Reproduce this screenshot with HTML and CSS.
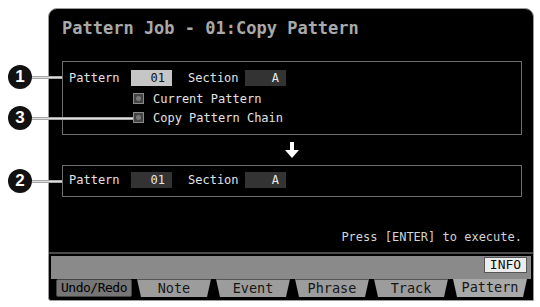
FILE: index.html
```html
<!DOCTYPE html>
<html lang="en">
<head>
    <meta charset="UTF-8">
    <title>Pattern Job - Copy Pattern</title>
    <link rel="stylesheet" href="styles.css">
</head>
<body>

    <div class="page">
        <!-- callout markers -->
        <div class="callout callout-1"><span class="num">1</span><span class="lead short"></span></div>
        <div class="callout callout-3"><span class="num">3</span><span class="lead long"></span></div>
        <div class="callout callout-2"><span class="num">2</span><span class="lead short"></span></div>

        <div class="screen">
            <div class="title">Pattern Job - 01:Copy Pattern</div>

            <div class="box source">
                <div class="row">
                    <span class="label">Pattern</span>
                    <span class="value light">01</span>
                    <span class="label section">Section</span>
                    <span class="value">A</span>
                </div>
                <div class="check-row">
                    <span class="check"></span>
                    <span>Current Pattern</span>
                </div>
                <div class="check-row">
                    <span class="check"></span>
                    <span>Copy Pattern Chain</span>
                </div>
            </div>

            <div class="arrow">
                <svg width="14" height="16" viewBox="0 0 14 16">
                    <path d="M5 0 H9 V8 H14 L7 16 L0 8 H5 Z" fill="#fff"/>
                </svg>
            </div>

            <div class="box dest">
                <div class="row">
                    <span class="label">Pattern</span>
                    <span class="value">01</span>
                    <span class="label section">Section</span>
                    <span class="value">A</span>
                </div>
            </div>

            <div class="message">Press [ENTER] to execute.</div>

            <div class="footer">
                <div class="bar">
                    <span class="info">INFO</span>
                </div>
                <div class="tabs">
                    <span class="tab undo">Undo/Redo</span>
                    <span class="tab">Note</span>
                    <span class="tab">Event</span>
                    <span class="tab">Phrase</span>
                    <span class="tab">Track</span>
                    <span class="tab active">Pattern</span>
                </div>
            </div>
        </div>
    </div>

</body>
</html>
```

FILE: styles.css
```css
body {
    margin: 0;
    background: #fff;
    font-family: "DejaVu Sans Mono", monospace;
}
.page {
    position: relative;
    width: 540px;
    height: 307px;
    padding-top: 8px;
    box-sizing: border-box;
}
.screen {
    margin-left: 48px;
    width: 486px;
    height: 293px;
    box-sizing: border-box;
    background: #000;
    border: 1px solid #9a9a9a;
    border-radius: 9px 9px 0 3px;
    display: flex;
    flex-direction: column;
    color: #e2e2e2;
    font-size: 12px;
}
.title {
    padding: 10px 13px 0;
    font-size: 17px;
    font-weight: bold;
    line-height: 18px;
    color: #a9a9a9;
}
.box {
    margin: 0 11px 0 13px;
    border: 1px solid #6e6e6e;
    padding: 8px 6px 7px;
}
.source {
    margin-top: 24px;
}
.dest {
    padding: 6px 6px 8px;
}
.row {
    display: flex;
    align-items: center;
    height: 16px;
}
.label {
    width: 62px;
    line-height: 16px;
}
.label.section {
    width: 57px;
    margin-left: 16px;
}
.value {
    width: 41px;
    height: 16px;
    line-height: 16px;
    box-sizing: border-box;
    padding-right: 7px;
    text-align: right;
    background: #333;
    color: #e8e8e8;
}
.value.light {
    background: #c6c6c6;
    color: #111;
}
.check-row {
    display: flex;
    align-items: center;
    height: 19px;
    padding-left: 64px;
}
.row + .check-row {
    margin-top: 3px;
}
.check {
    width: 11px;
    height: 11px;
    box-sizing: border-box;
    margin-right: 9px;
    border: 1px solid #8a8a8a;
    background: radial-gradient(circle, #777 0 2px, #444 3px);
}
.arrow {
    height: 30px;
    display: flex;
    align-items: center;
    justify-content: center;
    padding-left: 1px;
}
.message {
    margin-top: 32px;
    padding-right: 11px;
    text-align: right;
    line-height: 16px;
    color: #d4d4d4;
}
.footer {
    margin-top: auto;
    border-top: 2px solid #4a4a4a;
    padding: 2px 0 3px;
}
.bar {
    margin: 0 2px;
    height: 23px;
    background: #8a8a8a;
    display: flex;
    justify-content: flex-end;
    align-items: flex-start;
    padding-right: 4px;
}
.info {
    margin-top: 1px;
    width: 43px;
    height: 16px;
    box-sizing: border-box;
    background: #ececec;
    border: 1px solid #555;
    color: #111;
    font-size: 13px;
    line-height: 14px;
    text-align: center;
}
.tabs {
    display: flex;
    gap: 5px;
    height: 18px;
    padding: 0 6px 0 7px;
}
.tab {
    flex: 1;
    background: #9c9c9c;
    color: #161616;
    font-size: 13.5px;
    text-align: center;
    clip-path: polygon(0 0, 100% 0, calc(100% - 4px) 100%, 4px 100%);
    border-top: 1px solid #555;
    box-sizing: border-box;
    line-height: 16px;
}
.tab.undo {
    background: #767676;
    color: #000;
    clip-path: none;
    border: 1px solid #444;
    border-radius: 2px;
    font-size: 13px;
    letter-spacing: -0.5px;
}
.tab.active {
    background: #a9a9a9;
    border-top: none;
    line-height: 17px;
}
.callout {
    position: absolute;
    left: 8px;
    display: flex;
    align-items: center;
}
.callout-1 { top: 65px; }
.callout-3 { top: 106px; }
.callout-2 { top: 169px; }
.num {
    width: 24px;
    height: 24px;
    border-radius: 50%;
    background: #111;
    color: #fff;
    font-family: "Liberation Sans", sans-serif;
    font-weight: bold;
    font-size: 17px;
    line-height: 24px;
    text-align: center;
}
.lead {
    height: 3px;
    background: linear-gradient(#8a8a8a, #e0e0e0, #8a8a8a);
}
.lead.short {
    width: 30px;
}
.lead.long {
    width: 101px;
}
```
